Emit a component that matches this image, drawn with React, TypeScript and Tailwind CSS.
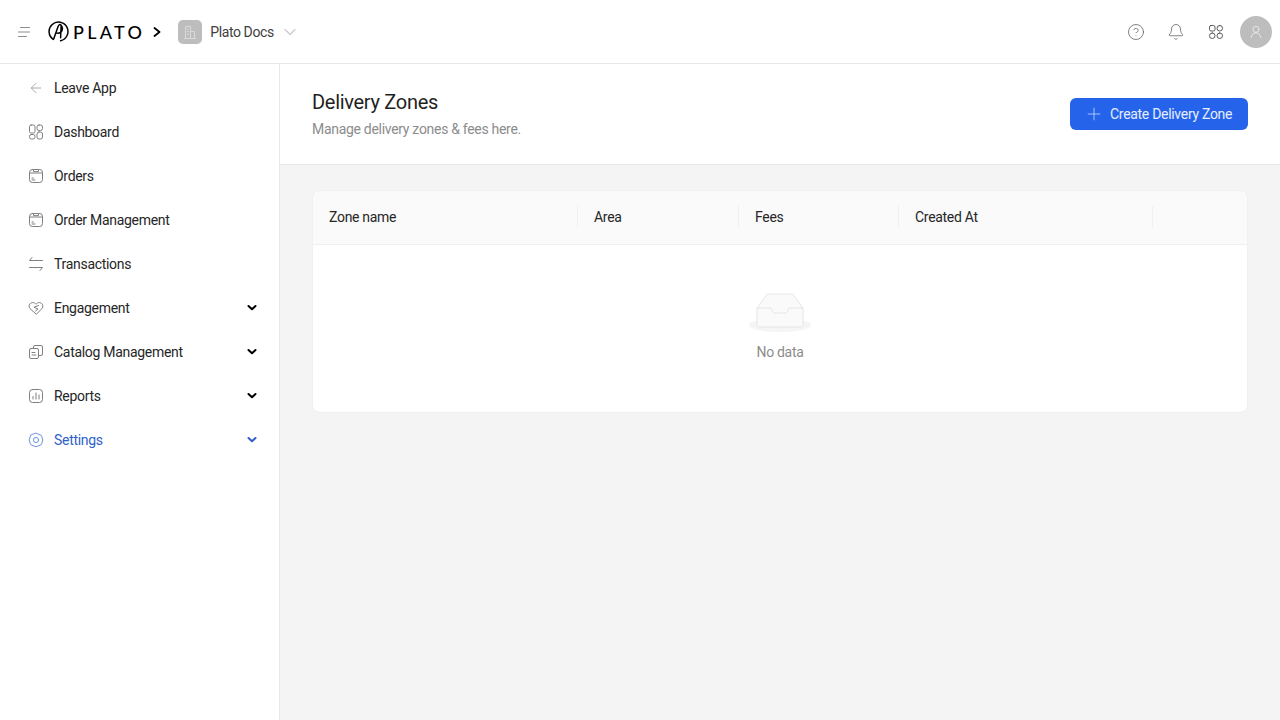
import { ArrowLeft, Bell, ChevronDown, CircleHelp, Plus } from "lucide-react"
import type { ReactNode } from "react"

const ic = { fill: "none", stroke: "currentColor", strokeWidth: 1, strokeLinecap: "round", strokeLinejoin: "round" } as const

function Svg({ children, className = "w-4 h-4" }: { children: ReactNode; className?: string }) {
  return (
    <svg viewBox="0 0 16 16" className={className} {...ic}>
      {children}
    </svg>
  )
}

const GridIcon = ({ className }: { className?: string }) => (
  <Svg className={className}>
    <rect x="1.500" y="1.500" width="5.500" height="5.500" rx="1.600" />
    <rect x="9" y="1.500" width="5.500" height="5.500" rx="2.700" />
    <rect x="1.500" y="9" width="5.500" height="5.500" rx="2.700" />
    <rect x="9" y="9" width="5.500" height="5.500" rx="2.700" />
  </Svg>
)

const DashIcon = () => (
  <Svg>
    <rect x="1.500" y="1" width="5.500" height="8" rx="1.600" />
    <rect x="9" y="1" width="5.500" height="5.500" rx="2" />
    <rect x="1.500" y="10.500" width="5.500" height="4.500" rx="1.800" />
    <rect x="9" y="8" width="5.500" height="7" rx="2" />
  </Svg>
)

const BoxIcon = () => (
  <Svg>
    <rect x="1.500" y="1.500" width="13" height="13" rx="2.800" />
    <path d="M1.500 5h13M5.500 1.500V3.600h5V1.500" />
    <path d="M4 10h1.500M4 12h3" />
  </Svg>
)

const SwapIcon = () => (
  <Svg>
    <path d="M4 1.500 1.500 4.500h13M12 14.500l2.500-3h-13" />
  </Svg>
)

const HeartIcon = () => (
  <Svg>
    <path d="M8 14 2 8.600C.3 6.800 1 3 4.300 2.600 6 2.400 7.200 3.200 8 4.200 8.800 3.200 10 2.400 11.700 2.600 15 3 15.700 6.800 14 8.600Z" />
    <path d="M10.500 5.500 6 7.200l4 1.800-2.500 2" />
  </Svg>
)

const CatalogIcon = () => (
  <Svg>
    <path d="M5.500 4V3a1.500 1.500 0 0 1 1.500-1.500h6A1.500 1.500 0 0 1 14.500 3v7a1.500 1.500 0 0 1-1.500 1.500h-2.500" />
    <rect x="1.500" y="4.500" width="9" height="10" rx="1.500" />
    <path d="M4 8.500h3M4 11h4" />
  </Svg>
)

const ReportIcon = () => (
  <Svg>
    <rect x="1.500" y="1.500" width="13" height="13" rx="3" />
    <path d="M5 11V8.500M8 11V5M11 11V7" />
  </Svg>
)

const SettingsIcon = () => (
  <Svg>
    <path d="M8 1.200 13.400 3.400 14.800 8 13.400 12.600 8 14.800 2.600 12.600 1.200 8 2.600 3.400Z" />
    <circle cx="8" cy="8" r="2.600" />
  </Svg>
)

const BoldChevron = () => (
  <svg viewBox="0 0 10 10" className="w-[10px] h-[10px]" fill="none" stroke="currentColor" strokeWidth="2" strokeLinecap="round" strokeLinejoin="round">
    <path d="M1.500 3 5 6.300 8.500 3" />
  </svg>
)

const navItems: { label: string; icon: ReactNode; more?: boolean; active?: boolean }[] = [
  { label: "Leave App", icon: <ArrowLeft className="w-4 h-4" strokeWidth={1} /> },
  { label: "Dashboard", icon: <DashIcon /> },
  { label: "Orders", icon: <BoxIcon /> },
  { label: "Order Management", icon: <BoxIcon /> },
  { label: "Transactions", icon: <SwapIcon /> },
  { label: "Engagement", icon: <HeartIcon />, more: true },
  { label: "Catalog Management", icon: <CatalogIcon />, more: true },
  { label: "Reports", icon: <ReportIcon />, more: true },
  { label: "Settings", icon: <SettingsIcon />, more: true, active: true },
]

const columns = ["Zone name", "Area", "Fees", "Created At", ""]

export default function App() {
  return (
    <div className="h-[720px] w-[1280px] overflow-hidden flex flex-col bg-[#f4f4f4] font-['Roboto',sans-serif] text-[14px] tracking-[-0.3px] text-[#262626]">
      {/* Top bar */}
      <header className="h-16 shrink-0 bg-white border-b border-[#e8e8e8] flex items-center pl-[18px] pr-2">
        <svg viewBox="0 0 12 10" className="w-3 h-[10px] text-[#8c8c8c]" fill="none" stroke="currentColor" strokeWidth="1" strokeLinecap="round">
          <path d="M2.500 .5h9M.5 5h11M.5 9.500h8" />
        </svg>
        <div className="ml-[18px] flex items-center">
          <svg viewBox="0 0 20 20" className="w-[21px] h-[21px] text-black" fill="none" stroke="currentColor" strokeWidth="1.400" strokeLinecap="round" strokeLinejoin="round">
            <path d="M5 17.500A9 9 0 1 1 12 18.800" />
            <path d="M5.500 17 9.500 5.500c.8-2.300 2-2.800 3-1.500 1.300 1.600 1.500 4 .5 5.800-.8 1.400-2.500 2-4.800 1.700M12.500 4.500 12 16" />
          </svg>
          <span className="ml-[4px] text-[18px] leading-none font-['Lato',sans-serif] font-medium tracking-[3.300px] text-black">PLATO</span>
        </div>
        <svg viewBox="0 0 10 10" className="ml-[7px] w-[10px] h-[10px] text-black" fill="none" stroke="currentColor" strokeWidth="1.800" strokeLinecap="round" strokeLinejoin="round">
          <path d="M2.500 1 7.500 5l-5 4" />
        </svg>
        <div className="ml-4 w-6 h-6 rounded-[5px] bg-[#bdbdbd] flex items-center justify-center text-[#d9d9d9]">
          <svg viewBox="0 0 16 16" className="w-4 h-4" fill="none" stroke="currentColor" strokeWidth="1">
            <path d="M2 14.500h12M3.500 14.500V2.500h5v12M8.500 7.500h4v7M5 5h2M5 7.500h2M5 10h2" />
          </svg>
        </div>
        <span className="ml-2 mt-[1px] tracking-[-0.4px] text-[#404040]">Plato Docs</span>
        <ChevronDown className="ml-[6px] w-5 h-5 text-[#8c8c8c]" strokeWidth={1} />

        <div className="ml-auto flex items-center">
          <CircleHelp className="w-[18px] h-[18px] text-[#595959]" strokeWidth={1} />
          <Bell className="ml-[22px] w-[18px] h-[18px] text-[#595959]" strokeWidth={1} />
          <GridIcon className="ml-[23px] w-4 h-4 text-[#595959]" />
          <div className="ml-4 w-8 h-8 rounded-full bg-[#bdbdbd] flex items-center justify-center text-[#e8e8e8]">
            <svg viewBox="0 0 16 16" className="w-[14px] h-[14px]" fill="none" stroke="currentColor" strokeWidth="1.100" strokeLinecap="round">
              <circle cx="8" cy="5" r="3.500" />
              <path d="M2.500 14.500c.3-3.500 2.500-5.500 5.500-5.500s5.200 2 5.500 5.500" />
            </svg>
          </div>
        </div>
      </header>

      <div className="flex-1 flex min-h-0">
        {/* Sidebar */}
        <aside className="w-[280px] shrink-0 bg-white border-r border-[#e8e8e8] pt-[2px]">
          {navItems.map((item) => (
            <div key={item.label} className={`h-11 flex items-center pl-7 pr-[22px] ${item.active ? "text-[#2f5fc9]" : ""}`}>
              <span className={`w-4 h-4 ${item.active ? "text-[#6f94e0]" : "text-[#808080]"}`}>{item.icon}</span>
              <span className="ml-[10px]">{item.label}</span>
              {item.more && (
                <span className={`ml-auto ${item.active ? "text-[#2f5fc9]" : "text-black"}`}>
                  <BoldChevron />
                </span>
              )}
            </div>
          ))}
        </aside>

        {/* Main */}
        <main className="flex-1 min-w-0">
          <div className="h-[101px] bg-white border-b border-[#e8e8e8] flex items-center justify-between pl-8 pr-8">
            <div>
              <h1 className="text-[20px] leading-7 font-normal text-[#1f1f1f] mt-[-1px]">Delivery Zones</h1>
              <p className="mt-[3px] text-[14px] leading-5 text-[#8c8c8c]">Manage delivery zones &amp; fees here.</p>
            </div>
            <button className="h-8 w-[178px] rounded-md bg-[#2563eb] text-white flex items-center pl-[14px]">
              <Plus className="w-5 h-5 text-[#a9c3f7]" strokeWidth={1.200} />
              <span className="ml-[6px] text-[#e6eeff]">Create Delivery Zone</span>
            </button>
          </div>

          <div className="px-8 pt-[25px]">
            <div className="bg-white rounded-lg border border-[#f0f0f0] overflow-hidden">
              <div className="h-[54px] pb-[2px] bg-[#fafafa] border-b border-[#f0f0f0] grid grid-cols-[265px_161px_160px_254px_1fr] items-center">
                {columns.map((c, i) => (
                  <div key={i} className={`h-[22px] leading-[22px] pl-4 ${i < 4 ? "border-r border-[#f0f0f0]" : ""}`}>
                    {c}
                  </div>
                ))}
              </div>
              <div className="h-[167px] flex flex-col items-center pt-[47px]">
                <svg viewBox="0 0 64 41" className="w-16 h-[41px]" fill="none">
                  <ellipse cx="32" cy="33" rx="31" ry="7" fill="#f5f5f5" />
                  <path d="M9 16 19.500 2h25L55 16v17a2 2 0 0 1-2 2H11a2 2 0 0 1-2-2Z" fill="#fafafa" stroke="#e6e6e6" />
                  <path d="M9 16h13c1.500 0 2 1 2.300 2.500.3 1.500 1 2.500 2.700 2.500h10c1.700 0 2.400-1 2.700-2.500.3-1.500.8-2.500 2.300-2.500h13" stroke="#e6e6e6" />
                </svg>
                <span className="mt-[9px] text-[#8c8c8c]">No data</span>
              </div>
            </div>
          </div>
        </main>
      </div>
    </div>
  )
}
